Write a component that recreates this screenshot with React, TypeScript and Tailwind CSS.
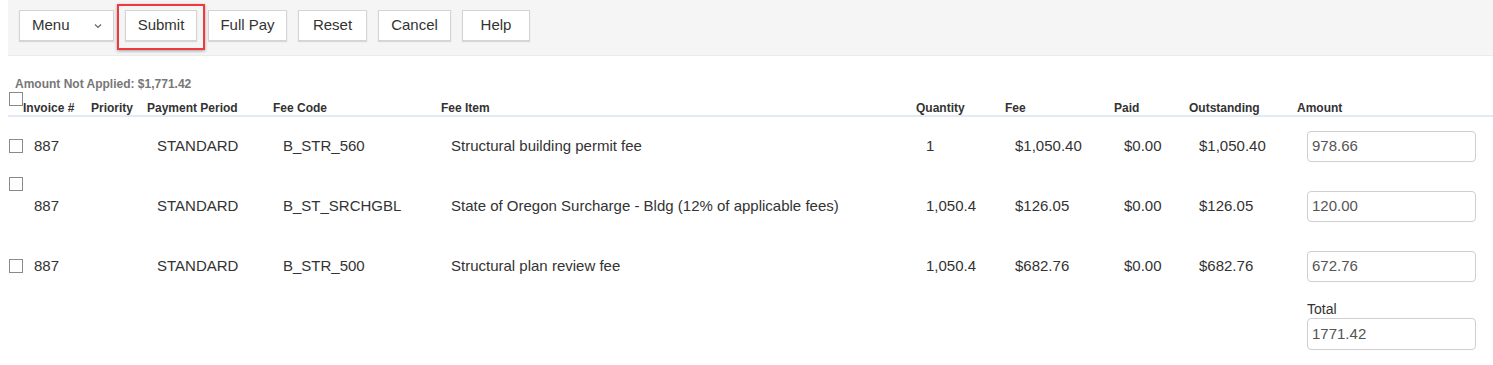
import React from "react";

const rows = [
  { inv: "887", pp: "STANDARD", code: "B_STR_560", item: "Structural building permit fee", qty: "1", fee: "$1,050.40", paid: "$0.00", out: "$1,050.40", amt: "978.66", top: false },
  { inv: "887", pp: "STANDARD", code: "B_ST_SRCHGBL", item: "State of Oregon Surcharge - Bldg (12% of applicable fees)", qty: "1,050.4", fee: "$126.05", paid: "$0.00", out: "$126.05", amt: "120.00", top: true },
  { inv: "887", pp: "STANDARD", code: "B_STR_500", item: "Structural plan review fee", qty: "1,050.4", fee: "$682.76", paid: "$0.00", out: "$682.76", amt: "672.76", top: false },
];

function Box() {
  return <div className="w-[14px] h-[14px] border border-[#8a8a8a] bg-white" />;
}

function Btn({ children, w }: { children: React.ReactNode; w: string }) {
  return (
    <div className={`${w} h-[31px] bg-white border border-[#d4d4d4] shadow-[0_1px_1px_rgba(0,0,0,0.12)] flex items-center justify-center text-[15px] text-[#333]`}>
      {children}
    </div>
  );
}

export default function App() {
  return (
    <div className="w-[1493px] h-[365px] bg-white overflow-hidden pl-[8px]" style={{ fontFamily: '"Liberation Sans", Arial, sans-serif' }}>
      {/* toolbar */}
      <div className="relative h-[56px] bg-[#f5f5f5] border-b border-[#ebebeb] flex items-start pt-[10px] pl-[11px] gap-[11px]">
        <div className="w-[95px] h-[31px] bg-white border border-[#d4d4d4] shadow-[0_1px_1px_rgba(0,0,0,0.12)] flex items-center text-[15px] text-[#333] pl-[12px]">
          <span>Menu</span>
          <svg className="ml-[24px]" width="8" height="6" viewBox="0 0 8 6">
            <path d="M1 1.5 L4 4.5 L7 1.5" fill="none" stroke="#666" strokeWidth="1.2" />
          </svg>
        </div>
        <Btn w="w-[72px]">Submit</Btn>
        <Btn w="w-[79px]">Full Pay</Btn>
        <Btn w="w-[69px]">Reset</Btn>
        <Btn w="w-[73px]">Cancel</Btn>
        <Btn w="w-[68px]">Help</Btn>
        <div className="absolute left-[109px] top-[4px] w-[88px] h-[46px] border-2 border-[#ee3a3f] shadow-[0_1px_3px_rgba(0,0,0,0.35)]" />
      </div>

      <div className="pt-[21px] pl-[7px] text-[12px] font-bold text-[#777] leading-[14px]">Amount Not Applied: $1,771.42</div>

      {/* header */}
      <div className="mt-[1px] h-[25px] flex items-start border-b-2 border-[#e3eaf5] text-[12px] font-bold text-[#333]">
        <div className="w-[15px] pl-[1px]"><Box /></div>
        <div className="w-[68px] pt-[9px] leading-[14px]">Invoice #</div>
        <div className="w-[56px] pt-[9px] leading-[14px]">Priority</div>
        <div className="w-[126px] pt-[9px] leading-[14px]">Payment Period</div>
        <div className="w-[168px] pt-[9px] leading-[14px]">Fee Code</div>
        <div className="w-[475px] pt-[9px] leading-[14px]">Fee Item</div>
        <div className="w-[89px] pt-[9px] leading-[14px]">Quantity</div>
        <div className="w-[109px] pt-[9px] leading-[14px]">Fee</div>
        <div className="w-[75px] pt-[9px] leading-[14px]">Paid</div>
        <div className="w-[108px] pt-[9px] leading-[14px]">Outstanding</div>
        <div className="pt-[9px] leading-[14px]">Amount</div>
      </div>

      {rows.map((r, i) => (
        <div key={i} className={`h-[60px] flex items-center text-[15px] text-[#333] ${i === 0 ? "mt-[-1px]" : ""}`}>
          <div className={`w-[15px] pl-[1px] ${r.top ? "self-start mt-[1px]" : ""}`}><Box /></div>
          <div className="w-[68px] pl-[11px]">{r.inv}</div>
          <div className="w-[56px]" />
          <div className="w-[126px] pl-[10px]">{r.pp}</div>
          <div className="w-[168px] pl-[10px]">{r.code}</div>
          <div className="w-[475px] pl-[10px]">{r.item}</div>
          <div className="w-[89px] pl-[10px]">{r.qty}</div>
          <div className="w-[109px] pl-[10px]">{r.fee}</div>
          <div className="w-[75px] pl-[10px]">{r.paid}</div>
          <div className="w-[108px] pl-[10px]">{r.out}</div>
          <div className="pl-[10px]">
            <div className="w-[169px] h-[31px] border border-[#cfcfcf] rounded-[4px] flex items-center pl-[4px] text-[15px] text-[#555]">{r.amt}</div>
          </div>
        </div>
      ))}

      <div className="flex">
        <div className="w-[1299px]" />
        <div>
          <div className="text-[14px] text-[#333] leading-[16px] mt-[5px]">Total</div>
          <div className="mt-[1px] w-[169px] h-[32px] border border-[#cfcfcf] rounded-[4px] flex items-center pl-[4px] text-[15px] text-[#555]">1771.42</div>
        </div>
      </div>
    </div>
  );
}
